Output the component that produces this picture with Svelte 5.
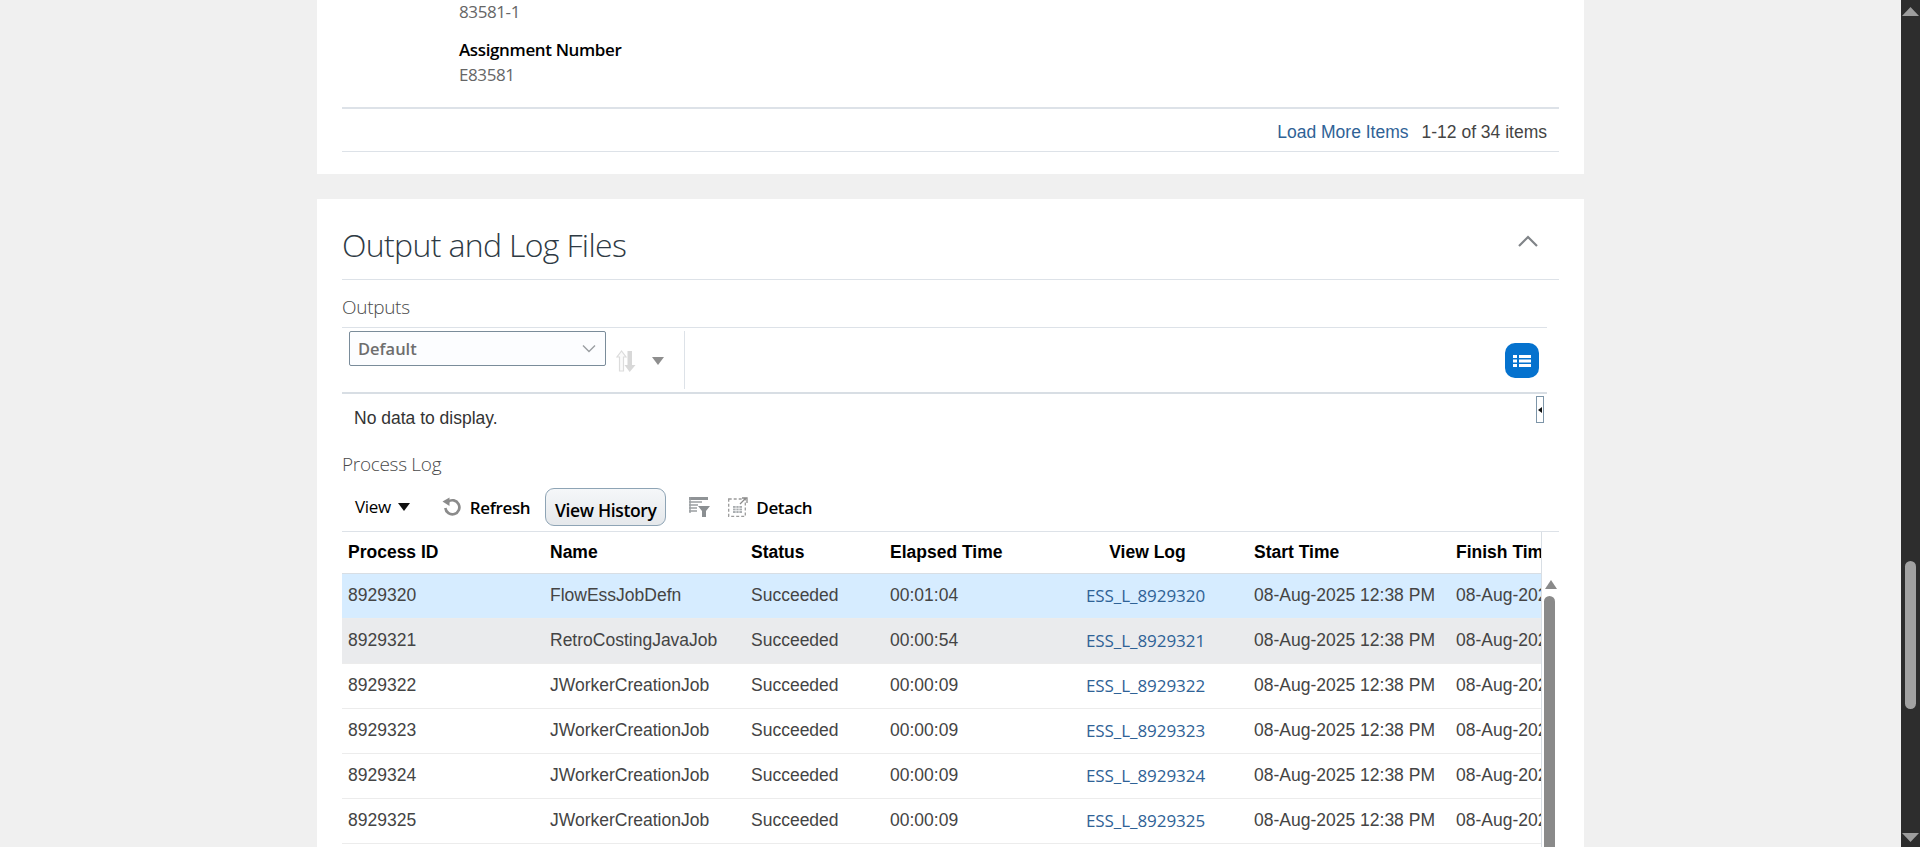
<script>
  const rows = [
    { id: '8929320', name: 'FlowEssJobDefn', time: '00:01:04', cls: 'sel' },
    { id: '8929321', name: 'RetroCostingJavaJob', time: '00:00:54', cls: 'hov' },
    { id: '8929322', name: 'JWorkerCreationJob', time: '00:00:09', cls: '' },
    { id: '8929323', name: 'JWorkerCreationJob', time: '00:00:09', cls: '' },
    { id: '8929324', name: 'JWorkerCreationJob', time: '00:00:09', cls: '' },
    { id: '8929325', name: 'JWorkerCreationJob', time: '00:00:09', cls: '' },
    { id: '8929326', name: 'JWorkerCreationJob', time: '00:00:09', cls: '' }
  ];
</script>

<div class="shell">
  <main class="page">
    <section class="panel first">
      <div class="person">
        <div class="value">83581-1</div>
        <div class="label">Assignment Number</div>
        <div class="value last">E83581</div>
      </div>
      <div class="pager">
        <span class="more">Load More Items</span>
        <span class="count">1-12 of 34 items</span>
      </div>
    </section>

    <section class="panel second">
      <header class="head">
        <h1>Output and Log Files</h1>
        <svg class="collapse" width="22" height="14" viewBox="0 0 22 14"><path d="M2 12 L11 3 L20 12" fill="none" stroke="#808488" stroke-width="2.2"/></svg>
      </header>

      <h2 class="outputs">Outputs</h2>
      <div class="outbar">
        <div class="select">
          <span>Default</span>
          <svg width="14" height="9" viewBox="0 0 14 9"><path d="M1 1.5 L7 7.5 L13 1.5" fill="none" stroke="#9a9ea2" stroke-width="1.4"/></svg>
        </div>
        <svg class="sort" width="20" height="23" viewBox="0 0 20 23">
          <path d="M5.5 1 L1 7 H3.5 V21 H7.5 V7 H10 Z" fill="#fafafa" stroke="#dcdcdc" stroke-width="1.2"/>
          <path d="M11.5 1 H16 V15 H19.5 L13.7 22 L8.5 15 H11.5 Z" fill="#d8d8d8"/>
        </svg>
        <svg class="caret" width="12" height="8" viewBox="0 0 12 8"><path d="M0 0 H12 L6 8 Z" fill="#8e8e8e"/></svg>
        <span class="vline"></span>
        <button class="listbtn" aria-label="List view">
          <svg width="18" height="12" viewBox="0 0 18 12" fill="#fff">
            <rect x="0" y="0" width="4" height="3"/><rect x="0" y="4.5" width="4" height="3"/><rect x="0" y="9" width="4" height="3"/>
            <rect x="6" y="0" width="12" height="3"/><rect x="6" y="4.5" width="12" height="3"/><rect x="6" y="9" width="12" height="3"/>
          </svg>
        </button>
      </div>
      <div class="nodata">
        <span>No data to display.</span>
        <span class="handle"><i></i></span>
      </div>

      <h2 class="plog">Process Log</h2>
      <div class="logbar">
        <span class="tool view">View</span>
        <svg class="vcaret" width="12" height="8" viewBox="0 0 12 8"><path d="M0 0 H12 L6 8 Z" fill="#111"/></svg>
        <svg class="refresh" width="20" height="20" viewBox="0 0 20 20">
          <path d="M6 4.8 A7 7 0 1 1 3.4 11" fill="none" stroke="#8b8b8b" stroke-width="2.7"/>
          <path d="M0.5 4.5 L7.5 0.5 V9 Z" fill="#8b8b8b"/>
        </svg>
        <span class="tool refreshtxt">Refresh</span>
        <button class="history">View History</button>
        <svg class="filter" width="21" height="20" viewBox="0 0 21 20">
          <path d="M0 0 H19 V3 H0 Z" fill="#8f9396"/>
          <path d="M0 5 H13 M0 8 H9 M0 11 H8 M0 14 H8" stroke="#9a9ea1" stroke-width="1.4"/>
          <path d="M1 0 V16" stroke="#9a9ea1" stroke-width="1.4"/>
          <path d="M9 9 H21 L17 14 V20 H13 V14 Z" fill="#8b8f92"/>
        </svg>
        <svg class="detach" width="20" height="20" viewBox="0 0 20 20">
          <rect x="0.7" y="2" width="16.6" height="17.3" fill="none" stroke="#9b9b9b" stroke-width="1.3" stroke-dasharray="3 2"/>
          <rect x="5" y="9" width="9" height="7" fill="#a9adb0"/>
          <path d="M5 11.3 H14 M5 13.6 H14 M8 9 V16 M11 9 V16" stroke="#fff" stroke-width="0.7"/>
          <path d="M12 7 L18 1 M14 1 H19 V6" fill="none" stroke="#8b8b8b" stroke-width="1.3"/>
        </svg>
        <span class="tool detachtxt">Detach</span>
      </div>

      <div class="tablewrap">
        <table>
          <colgroup>
            <col style="width:202px"/><col style="width:201px"/><col style="width:139px"/><col style="width:163px"/><col style="width:201px"/><col style="width:202px"/><col style="width:199px"/>
          </colgroup>
          <thead>
            <tr>
              <th>Process ID</th><th>Name</th><th>Status</th><th>Elapsed Time</th><th class="ctr">View Log</th><th>Start Time</th><th>Finish Time</th>
            </tr>
          </thead>
          <tbody>
            {#each rows as r}
              <tr class={r.cls}>
                <td>{r.id}</td>
                <td>{r.name}</td>
                <td>Succeeded</td>
                <td>{r.time}</td>
                <td class="ctr"><span class="link">ESS_L_{r.id}</span></td>
                <td>08-Aug-2025 12:38 PM</td>
                <td>08-Aug-2025 12:38 PM</td>
              </tr>
            {/each}
          </tbody>
        </table>
        <div class="innerscroll">
          <span class="arrow"></span>
          <span class="thumb"></span>
        </div>
      </div>
    </section>
  </main>

  <aside class="scrollbar">
    <svg class="sa" width="19" height="11" viewBox="0 0 19 11"><path d="M9.5 1 L18 10 H1 Z" fill="#9d9d9d"/></svg>
    <span class="sthumb"></span>
    <svg class="sb" width="19" height="11" viewBox="0 0 19 11"><path d="M9.5 10 L18 1 H1 Z" fill="#9d9d9d"/></svg>
  </aside>
</div>

<style>
  :global(body) { margin: 0; background: #f0f0f0; overflow: hidden; }
  .shell { display: flex; height: 847px; overflow: hidden; background: #f0f0f0; font-family: "Liberation Sans", Arial, sans-serif; }
  .page { flex: 1; padding-left: 317px; padding-right: 317px; min-width: 0; }
  .panel { background: #fff; padding: 0 25px; }
  .first { height: 174px; }
  .second { margin-top: 25px; height: 700px; }

  .person { padding: 1px 0 0 117px; height: 107px; box-sizing: border-box; font-family: "Open Sans", sans-serif; font-size: 17px; }
  .value { color: #666; line-height: 22px; letter-spacing: -0.4px; }
  .value.last { margin-top: 3px; }
  .label { margin-top: 16px; color: #000; font-weight: 600; line-height: 22px; letter-spacing: -0.37px; }
  .pager { height: 45px; box-sizing: border-box; border-top: 2px solid #dde2e8; border-bottom: 1px solid #dde2e8; display: flex; justify-content: flex-end; align-items: center; gap: 13px; padding: 4px 12px 0 0; font-size: 17.5px; }
  .more { color: #2f6296; }
  .count { color: #444; }

  .head { height: 81px; box-sizing: border-box; border-bottom: 1px solid #dde2e8; display: flex; justify-content: space-between; align-items: flex-start; padding: 25px 20px 0 0; }
  h1 { margin: 0; font-family: "Open Sans", sans-serif; font-weight: 300; font-size: 32px; line-height: 42px; color: #2e3a44; letter-spacing: -0.66px; }
  .collapse { margin-top: 10px; }

  h2 { margin: 0; font-family: "Open Sans", sans-serif; font-weight: 300; font-size: 19px; color: #4a4a4a; line-height: 24px; letter-spacing: -0.3px; }
  .outputs { margin-top: 15px; height: 32px; box-sizing: border-box; }
  .outbar { width: 1205px; height: 67px; box-sizing: border-box; border-top: 1px solid #dde2e8; border-bottom: 2px solid #d8dee4; position: relative; display: flex; align-items: flex-start; padding: 3px 7px 0 7px; }
  .select { width: 257px; height: 35px; box-sizing: border-box; border: 1px solid #7a8c9a; border-radius: 2px; background: #fcfdff; display: flex; align-items: center; justify-content: space-between; padding: 0 9px 0 8px; font-family: "Open Sans", sans-serif; font-weight: 600; font-size: 16.5px; color: #6e6e6e; }
  .sort { margin: 19px 0 0 10px; }
  .caret { margin: 26px 0 0 16px; }
  .vline { width: 1px; height: 58px; background: #dde2e8; margin-left: 20px; }
  .listbtn { margin: 12px 1px 0 auto; width: 34px; height: 35px; border: 0; border-radius: 10px; background: #0572ce; padding: 0; display: flex; align-items: center; justify-content: center; }

  .nodata { width: 1205px; height: 48px; position: relative; font-size: 17.5px; color: #333; padding-left: 12px; box-sizing: border-box; line-height: 48px; }
  .handle { position: absolute; left: 1194px; top: 2px; width: 8px; height: 27px; box-sizing: border-box; border: 1px solid #7d95a8; background: #fff; display: flex; align-items: center; justify-content: center; }
  .handle i { width: 0; height: 0; border-top: 3.5px solid transparent; border-bottom: 3.5px solid transparent; border-right: 4px solid #111; }

  .plog { margin-top: 10px; }
  .logbar { height: 55px; box-sizing: border-box; padding-top: 8px; display: flex; align-items: center; font-family: "Open Sans", sans-serif; font-size: 17px; color: #000; }
  .tool { letter-spacing: -0.35px; font-weight: 600; }
  .view { margin-left: 13px; margin-top: -2px; font-weight: 500; }
  .vcaret { margin-left: 7px; margin-top: -2px; }
  .refresh { margin-left: 32px; margin-top: -2px; }
  .refreshtxt { margin-left: 8px; }
  .history { margin-left: 15px; margin-top: -2px; width: 121px; height: 38px; box-sizing: border-box; border: 1px solid #8ea4b5; border-radius: 9px; background: linear-gradient(#f5f7f9, #e5e8eb); font: 600 17.5px "Open Sans", sans-serif; letter-spacing: -0.35px; color: #000; padding: 6px 0 0; white-space: nowrap; }
  .filter { margin-left: 23px; margin-top: -2px; }
  .detach { margin-left: 18px; margin-top: -2px; }
  .detachtxt { margin-left: 8px; }

  .tablewrap { width: 1217px; height: 400px; position: relative; overflow: hidden; border-top: 1px solid #dde2e8; }
  table { table-layout: fixed; border-collapse: collapse; width: 1307px; }
  th { height: 41px; box-sizing: border-box; text-align: left; padding: 0 0 0 6px; font-size: 17.5px; font-weight: 700; color: #000; border-bottom: 1px solid #d8dee4; white-space: nowrap; overflow: hidden; }
  td { height: 45px; box-sizing: border-box; padding: 0 0 1px 6px; font-size: 17.5px; color: #444; border-bottom: 1px solid #ececec; white-space: nowrap; overflow: hidden; }
  th.ctr, td.ctr { text-align: center; padding-left: 0; padding-right: 0; }
  td.ctr { padding: 0 4px 0 0; }
  .link { font-family: "Open Sans", sans-serif; font-size: 17px; color: #2f6296; font-weight: 500; letter-spacing: -0.05px; }
  tr.sel td { background: #d6ecff; }
  tr.hov td { background: #eaebed; }

  .innerscroll { position: absolute; left: 1199px; top: 0; width: 18px; height: 100%; background: #fff; box-sizing: border-box; border-left: 1px solid #d8dee4; }
  .arrow { position: absolute; left: 3px; top: 48px; width: 0; height: 0; border-left: 6.5px solid transparent; border-right: 6.5px solid transparent; border-bottom: 9px solid #8a8a8a; }
  .thumb { position: absolute; left: 2px; top: 64px; width: 11px; height: 400px; border-radius: 6px; background: #8a8a8a; }

  .scrollbar { width: 19px; background: #2d2d2d; position: relative; flex: none; }
  .sa { position: absolute; top: 6px; left: 0; }
  .sb { position: absolute; top: 832px; left: 0; }
  .sthumb { position: absolute; left: 4px; top: 561px; width: 11px; height: 148px; border-radius: 6px; background: #a2a2a2; }
</style>
